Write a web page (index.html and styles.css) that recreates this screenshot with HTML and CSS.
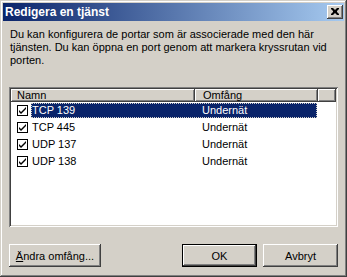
FILE: index.html
```html
<!DOCTYPE html>
<html lang="sv">
<head>
<meta charset="utf-8">
<title>Redigera en tjänst</title>
<link rel="stylesheet" href="styles.css">
</head>
<body>
<div class="window">
  <div class="titlebar">
    <span class="title">Redigera en tjänst</span>
    <span class="close">
      <svg width="8" height="7" viewBox="0 0 8 7"><path d="M0 0h2l2 2 2-2h2v1l-2 2v1l2 2v1h-2l-2-2-2 2h-2v-1l2-2v-1l-2-2z" fill="#000"/></svg>
    </span>
  </div>
  <div class="content">
    <p class="intro">Du kan konfigurera de portar som är associerade med den här tjänsten. Du kan öppna en port genom att markera kryssrutan vid porten.</p>
    <div class="list">
      <div class="header">
        <div class="hcell c1">Namn</div>
        <div class="hcell c2">Omfång</div>
        <div class="hcell c3"></div>
      </div>
      <div class="row">
        <span class="check"><svg width="9" height="9" viewBox="0 0 9 9"><path d="M1 4l2 2 5-5v2l-5 5-2-2z" fill="#000"/></svg></span>
        <span class="name selected">TCP 139<span class="scope">Undernät</span></span>
      </div>
      <div class="row">
        <span class="check"><svg width="9" height="9" viewBox="0 0 9 9"><path d="M1 4l2 2 5-5v2l-5 5-2-2z" fill="#000"/></svg></span>
        <span class="name">TCP 445<span class="scope">Undernät</span></span>
      </div>
      <div class="row">
        <span class="check"><svg width="9" height="9" viewBox="0 0 9 9"><path d="M1 4l2 2 5-5v2l-5 5-2-2z" fill="#000"/></svg></span>
        <span class="name">UDP 137<span class="scope">Undernät</span></span>
      </div>
      <div class="row">
        <span class="check"><svg width="9" height="9" viewBox="0 0 9 9"><path d="M1 4l2 2 5-5v2l-5 5-2-2z" fill="#000"/></svg></span>
        <span class="name">UDP 138<span class="scope">Undernät</span></span>
      </div>
    </div>
    <div class="buttons">
      <button class="btn wide"><u>Ä</u>ndra omfång...</button>
      <span class="spacer"></span>
      <button class="btn default">OK</button>
      <button class="btn">Avbryt</button>
    </div>
  </div>
</div>
</body>
</html>
```

FILE: styles.css
```css
html, body {
  margin: 0;
  padding: 0;
  background: #d4d0c8;
}
.window {
  width: 347px;
  height: 277px;
  box-sizing: border-box;
  padding: 3px;
  background: #d4d0c8;
  box-shadow: inset -1px -1px #404040, inset 1px 1px #d4d0c8, inset -2px -2px #808080, inset 2px 2px #ffffff;
  font-family: "Liberation Sans", Arial, sans-serif;
  font-size: 11px;
  color: #000;
}
.titlebar {
  height: 18px;
  display: flex;
  align-items: center;
  justify-content: space-between;
  padding: 0 1px 0 2px;
  background: linear-gradient(to right, #0a246a, #a6caf0);
}
.title {
  color: #fff;
  font-weight: bold;
  font-size: 12px;
}
.close {
  width: 16px;
  height: 14px;
  box-sizing: border-box;
  background: #d4d0c8;
  box-shadow: inset -1px -1px #404040, inset 1px 1px #ffffff, inset -2px -2px #808080;
  display: flex;
  align-items: center;
  justify-content: center;
  padding-left: 0;
}
.close svg { display: block; margin-top: -1px; }
.content {
  padding: 0 6px;
}
.intro {
  margin: 7px 0 0 1px;
  line-height: 13px;
  height: 59px;
}
.list {
  height: 140px;
  box-sizing: border-box;
  background: #fff;
  box-shadow: inset 1px 1px #808080, inset -1px -1px #ffffff, inset 2px 2px #404040, inset -2px -2px #d4d0c8;
  padding: 2px;
}
.header {
  display: flex;
  height: 13px;
}
.hcell {
  box-sizing: border-box;
  height: 13px;
  background: #d4d0c8;
  box-shadow: inset -1px -1px #404040, inset 1px 1px #ffffff, inset -2px -2px #808080;
  padding-left: 6px;
  line-height: 12px;
}
.c1 { width: 184px; }
.c2 { width: 123px; padding-left: 8px; }
.c3 { flex: 1; }
.row {
  height: 17px;
  display: flex;
  align-items: center;
}
.check {
  width: 11px;
  height: 11px;
  box-sizing: border-box;
  border: 1px solid #000;
  margin-left: 6px;
  display: flex;
  align-items: center;
  justify-content: center;
  background: #fff;
}
.check svg { display: block; }
.name {
  position: relative;
  margin-left: 3px;
  width: 286px;
  height: 15px;
  line-height: 15px;
  padding-left: 1px;
  box-sizing: border-box;
}
.scope {
  position: absolute;
  left: 171px;
  top: 0;
}
.selected {
  background: #0a246a;
  color: #fff;
  outline: 1px dotted #d4d0c8;
  outline-offset: -1px;
}
.buttons {
  display: flex;
  margin-top: 17px;
  gap: 6px;
}
.spacer { flex: 1; }
.btn {
  font-family: "Liberation Sans", Arial, sans-serif;
  font-size: 11px;
  color: #000;
  height: 23px;
  width: 75px;
  padding: 0;
  border: none;
  background: #d4d0c8;
  box-shadow: inset -1px -1px #404040, inset 1px 1px #ffffff, inset -2px -2px #808080, inset 2px 2px #d4d0c8;
}
.btn.wide { width: 92px; }
.btn.default {
  box-shadow: inset 0 0 0 1px #000, inset -2px -2px #404040, inset 2px 2px #ffffff, inset -3px -3px #808080;
}
```
